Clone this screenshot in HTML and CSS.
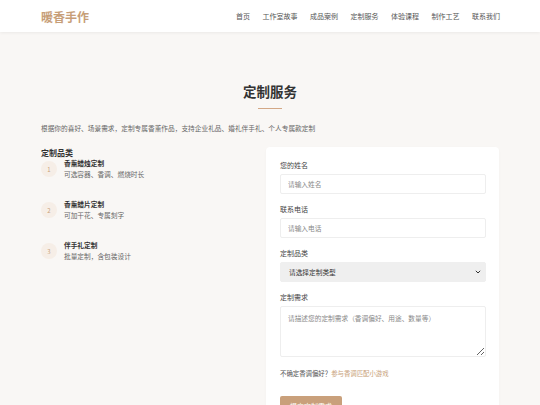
FILE: index.html
```html
<!DOCTYPE html>
<html lang="zh">
<head>
<meta charset="utf-8">
<link rel="stylesheet" href="styles.css">
</head>
<body>
<header class="header">
  <div class="logo">暖香手作</div>
  <nav class="nav">
    <a>首页</a><a>工作室故事</a><a>成品案例</a><a>定制服务</a><a>体验课程</a><a>制作工艺</a><a>联系我们</a>
  </nav>
</header>
<main class="main">
  <h1 class="title">定制服务</h1>
  <div class="title-line"></div>
  <p class="intro">根据你的喜好、场景需求，定制专属香薰作品，支持企业礼品、婚礼伴手礼、个人专属款定制</p>
  <div class="grid">
    <section class="cats">
      <h2 class="cats-title">定制品类</h2>
      <div class="cat">
        <span class="num">1</span>
        <div class="cat-text"><div class="cat-name">香薰蜡烛定制</div><div class="cat-desc">可选容器、香调、燃烧时长</div></div>
      </div>
      <div class="cat">
        <span class="num">2</span>
        <div class="cat-text"><div class="cat-name">香薰蜡片定制</div><div class="cat-desc">可加干花、专属刻字</div></div>
      </div>
      <div class="cat">
        <span class="num">3</span>
        <div class="cat-text"><div class="cat-name">伴手礼定制</div><div class="cat-desc">批量定制，含包装设计</div></div>
      </div>
    </section>
    <form class="card">
      <label class="label">您的姓名</label>
      <input class="input" placeholder="请输入姓名">
      <label class="label">联系电话</label>
      <input class="input" placeholder="请输入电话">
      <label class="label">定制品类</label>
      <div class="select-wrap">
        <select class="select"><option>请选择定制类型</option></select>
        <svg class="chev" width="6" height="4" viewBox="0 0 6 4"><path d="M0.8 0.8 L3 3 L5.2 0.8" fill="none" stroke="#333" stroke-width="1"/></svg>
      </div>
      <label class="label">定制需求</label>
      <textarea class="textarea" placeholder="请描述您的定制需求（香调偏好、用途、数量等）"></textarea>
      <p class="hint">不确定香调偏好？<a class="link">参与香调匹配小游戏</a></p>
      <button type="button" class="btn">提交定制需求</button>
    </form>
  </div>
</main>
</body>
</html>
```
FILE: styles.css
```css
* { box-sizing: border-box; }
html, body { margin: 0; padding: 0; }
body {
  background: #f9f7f5;
  font-family: "Noto Sans CJK SC", "Noto Sans", sans-serif;
  color: #333;
}
.header {
  height: 32px;
  background: #fff;
  box-shadow: 0 1px 3px rgba(0,0,0,0.06);
  display: flex;
  align-items: center;
  justify-content: space-between;
  padding: 0 40px 0 41px;
}
.logo {
  font-size: 12px;
  font-weight: 700;
  color: #c79e78;
}
.nav { display: flex; gap: 12.5px; }
.nav a { font-size: 7px; color: #555; }
.main { padding: 0 41px; }
.title {
  margin: 0;
  padding-top: 48px;
  text-align: center;
  font-size: 13.5px;
  line-height: 22px;
  font-weight: 700;
  color: #333;
}
.title-line {
  width: 24px;
  height: 1px;
  background: #d3a886;
  margin: 6px auto 0;
}
.intro {
  margin: 14px 0 0;
  font-size: 6.7px;
  line-height: 10px;
  color: #666;
}
.grid {
  display: grid;
  grid-template-columns: 1fr 233px;
  column-gap: 14px;
  margin-top: 14px;
}
.cats-title {
  margin: 0;
  font-size: 8px;
  line-height: 11px;
  font-weight: 700;
  color: #333;
}
.cat {
  display: flex;
  align-items: center;
  gap: 7px;
  margin-bottom: 19px;
}
.num {
  width: 16px;
  height: 16px;
  border-radius: 50%;
  background: #f6eee7;
  color: #c79e78;
  font-size: 6px;
  display: flex;
  align-items: center;
  justify-content: center;
  flex: none;
}
.cat-name {
  font-size: 6.7px;
  line-height: 11px;
  font-weight: 700;
  color: #333;
}
.cat-desc {
  font-size: 6.7px;
  line-height: 11px;
  color: #666;
}
.card {
  background: #fff;
  border-radius: 4px;
  padding: 13px 13px 20px 14px;
  display: flex;
  flex-direction: column;
  box-shadow: 0 1px 3px rgba(0,0,0,0.03);
}
.label {
  font-size: 7px;
  line-height: 10px;
  color: #444;
  margin-bottom: 4px;
}
.input, .select, .textarea {
  display: block;
  width: 100%;
  font-family: inherit;
  font-size: 6.7px;
  border: 1px solid #eeeeee;
  border-radius: 2px;
  background: #fff;
  color: #333;
  margin: 0;
  outline: none;
}
.input { height: 20px; padding: 0 7px; margin-bottom: 10px; }
.input::placeholder, .textarea::placeholder { color: #888; }
.select-wrap { position: relative; margin-bottom: 10px; }
.select {
  height: 20px;
  padding: 0 8px;
  background: #efefef;
  border-color: #efefef;
  color: #333;
  appearance: none;
  -webkit-appearance: none;
}
.chev { position: absolute; right: 5px; top: 8px; }
.textarea {
  height: 51px;
  padding: 6px 7px;
  resize: vertical;
  margin-bottom: 12px;
}
.hint {
  margin: 0;
  font-size: 6.4px;
  line-height: 10px;
  color: #555;
}
.link { color: #c79e78; }
.btn {
  align-self: flex-start;
  margin-top: 17px;
  height: 20px;
  padding: 0 10px;
  border: none;
  border-radius: 2px;
  background: #c9a07b;
  color: #fff;
  font-family: inherit;
  font-size: 7px;
}
```
